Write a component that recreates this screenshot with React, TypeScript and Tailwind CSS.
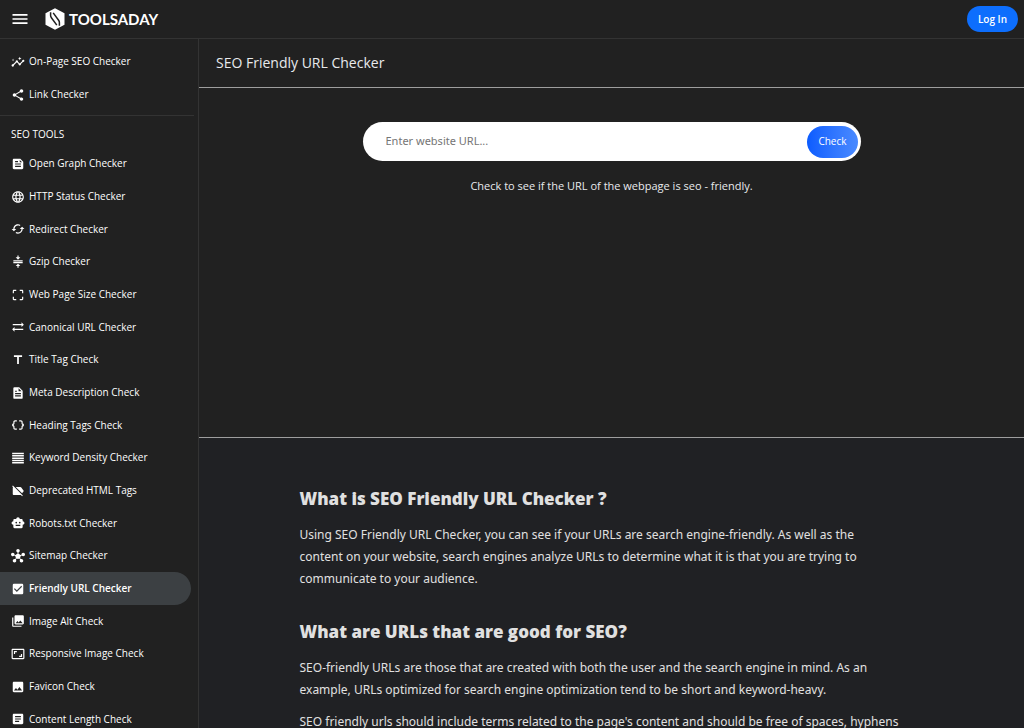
import type { ComponentType } from 'react'
import {
  MdArticle, MdAspectRatio, MdCached, MdCheckBox, MdCompress, MdCropFree, MdDataObject, MdFeed, MdHub,
  MdImage, MdInsights, MdLabelOff, MdLanguage, MdMenu, MdPhotoLibrary, MdShare, MdSmartToy, MdSyncAlt,
  MdTitle,
} from 'react-icons/md'
import { BiSolidFile } from 'react-icons/bi'

interface Tool {
  label: string
  icon: ComponentType<{ size?: number }>
}

function DensityIcon({ size = 14 }: { size?: number }) {
  return (
    <svg width={size} height={size} viewBox="0 0 24 24" fill="currentColor" aria-hidden="true">
      <path d="M2 3h20v2.6H2zM2 7h20v2.6H2zM2 11h20v2.6H2zM2 15h20v2.6H2zM2 19h20v2.6H2z" />
    </svg>
  )
}

const TOP_TOOLS: Tool[] = [
  { label: 'On-Page SEO Checker', icon: MdInsights },
  { label: 'Link Checker', icon: MdShare },
]

const SEO_TOOLS: Tool[] = [
  { label: 'Open Graph Checker', icon: MdFeed },
  { label: 'HTTP Status Checker', icon: MdLanguage },
  { label: 'Redirect Checker', icon: MdCached },
  { label: 'Gzip Checker', icon: MdCompress },
  { label: 'Web Page Size Checker', icon: MdCropFree },
  { label: 'Canonical URL Checker', icon: MdSyncAlt },
  { label: 'Title Tag Check', icon: MdTitle },
  { label: 'Meta Description Check', icon: BiSolidFile },
  { label: 'Heading Tags Check', icon: MdDataObject },
  { label: 'Keyword Density Checker', icon: DensityIcon },
  { label: 'Deprecated HTML Tags', icon: MdLabelOff },
  { label: 'Robots.txt Checker', icon: MdSmartToy },
  { label: 'Sitemap Checker', icon: MdHub },
  { label: 'Friendly URL Checker', icon: MdCheckBox },
  { label: 'Image Alt Check', icon: MdPhotoLibrary },
  { label: 'Responsive Image Check', icon: MdAspectRatio },
  { label: 'Favicon Check', icon: MdImage },
  { label: 'Content Length Check', icon: MdArticle },
]

const ACTIVE = 'Friendly URL Checker'

function Logo() {
  return (
    <a href="#" className="flex items-center gap-1">
      <svg viewBox="0 0 20 22" className="h-[22px] w-5" aria-hidden="true">
        <path d="M10 0.3 19.5 5.3v11.4L10 21.7 0.5 16.7V5.3z" fill="#fff" />
        <path
          d="M5.6 4.2v3.4c0 .8.3 1.4.8 2.1l5.4 7.4M8.2 4.9l5.4 7.4c.5.7.8 1.3.8 2.1v3.4"
          fill="none"
          stroke="#212121"
          strokeWidth="1.5"
        />
      </svg>
      <span className="font-['Lato',sans-serif] text-[15px] leading-none font-bold text-white">TOOLSADAY</span>
    </a>
  )
}

function ToolList({ tools }: { tools: Tool[] }) {
  return (
    <ul>
      {tools.map(({ label, icon: Icon }) => (
        <li key={label} className="h-[33px] nth-[3n]:h-8">
          <a
            href="#"
            aria-current={label === ACTIVE ? 'page' : undefined}
            className={`mr-[7px] flex h-full items-center gap-1 rounded-r-full pl-[11px] text-[10px] whitespace-nowrap text-white ${
              label === ACTIVE ? 'bg-[#3c4043] font-semibold' : 'font-medium hover:bg-[#303134]'
            }`}
          >
            <Icon size={14} />
            {label}
          </a>
        </li>
      ))}
    </ul>
  )
}

function Sidebar() {
  return (
    <nav className="w-[199px] shrink-0 overflow-y-auto border-r border-[#333] [scrollbar-width:none]">
      <div className="mr-1 border-b border-[#333] pt-1.5 pb-1">
        <ToolList tools={TOP_TOOLS} />
      </div>
      <h2 className="pt-2.5 pb-[5px] pl-[11px] text-[10px] leading-4 font-medium text-white">SEO TOOLS</h2>
      <ToolList tools={SEO_TOOLS} />
    </nav>
  )
}

function CheckForm() {
  return (
    <section className="flex min-h-[350px] shrink-0 flex-col items-center border-b border-[#9e9e9e] px-4 pt-[34px]">
      <form
        onSubmit={e => e.preventDefault()}
        className="flex h-[39px] w-full max-w-[498px] items-center rounded-full bg-white pr-[3px] pl-[23px]"
      >
        <input
          type="url"
          aria-label="Website URL"
          placeholder="Enter website URL..."
          className="min-w-0 flex-1 bg-transparent font-['Noto_Sans',sans-serif] text-[11px] text-[#212121] outline-none placeholder:text-[#757575]"
        />
        <button
          type="submit"
          className="h-8 rounded-full bg-linear-to-r from-[#0b5cff] to-[#4a8aff] px-[11px] text-[10px] font-medium text-white"
        >
          Check
        </button>
      </form>
      <p className="mt-[17px] text-[11px] leading-4 text-[#e8eaed]">
        Check to see if the URL of the webpage is seo - friendly.
      </p>
    </section>
  )
}

function Article() {
  return (
    <article className="flex-1 bg-[#202124] px-4 pt-[47px] font-['Noto_Sans',sans-serif] text-xs leading-[22px] text-[#e0e0e0]">
      <div className="mx-auto max-w-[624px] pr-6">
        <h2 className="font-['Open_Sans',sans-serif] text-[17px] leading-7 font-extrabold">
          What is SEO Friendly URL Checker ?
        </h2>
        <p className="mt-[11px]">
          Using SEO Friendly URL Checker, you can see if your URLs are search engine-friendly. As well as the
          content on your website, search engines analyze URLs to determine what it is that you are trying to
          communicate to your audience.
        </p>
        <h2 className="mt-7 font-['Open_Sans',sans-serif] text-[17px] leading-7 font-extrabold">
          What are URLs that are good for SEO?
        </h2>
        <p className="mt-[11px]">
          SEO-friendly URLs are those that are created with both the user and the search engine in mind. As an
          example, URLs optimized for search engine optimization tend to be short and keyword-heavy.
        </p>
        <p className="mt-2.5">
          SEO friendly urls should include terms related to the page's content and should be free of spaces, hyphens
        </p>
      </div>
    </article>
  )
}

export default function App() {
  return (
    <div className="flex h-screen flex-col bg-[#212121] font-['Open_Sans',sans-serif]">
      <header className="flex h-[39px] shrink-0 items-center border-b border-[#333] pr-1.5 pl-2.5">
        <button aria-label="Menu" className="mr-[15px] text-white">
          <MdMenu size={20} />
        </button>
        <Logo />
        <button className="ml-auto h-[26px] rounded-full bg-[#0d6efd] px-[11px] text-[10px] font-semibold text-white">
          Log In
        </button>
      </header>
      <div className="flex min-h-0 flex-1">
        <Sidebar />
        <main className="flex min-w-0 flex-1 flex-col overflow-y-auto [scrollbar-width:none]">
          <h1 className="shrink-0 border-b border-[#9e9e9e] px-[17px] py-3 text-sm leading-6 text-[#e8eaed]">
            SEO Friendly URL Checker
          </h1>
          <CheckForm />
          <Article />
        </main>
      </div>
    </div>
  )
}
